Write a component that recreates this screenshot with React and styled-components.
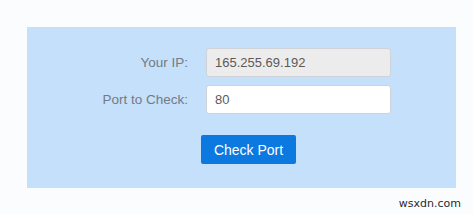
import React from "react";
import styled, { createGlobalStyle } from "styled-components";

const Global = createGlobalStyle`
  html, body { margin: 0; padding: 0; background: #fbfcfd; }
  body { font-family: "Liberation Sans", Arial, sans-serif; }
`;

const Page = styled.div`
  width: 473px;
  height: 214px;
  box-sizing: border-box;
  padding: 27px 17px 0 27px;
  display: flex;
  flex-direction: column;
`;

const Panel = styled.div`
  width: 429px;
  height: 161px;
  box-sizing: border-box;
  background: #c5e0fb;
  padding-top: 21px;
  display: flex;
  flex-direction: column;
`;

const Row = styled.div`
  display: grid;
  grid-template-columns: 161px 185px;
  column-gap: 18px;
  align-items: center;
  margin-bottom: ${(p) => p.$mb || 0}px;
`;

const Label = styled.label`
  text-align: right;
  font-size: 13.5px;
  color: #737b85;
`;

const Input = styled.input`
  box-sizing: border-box;
  width: 185px;
  height: 29px;
  border: 1px solid #cfd3d8;
  border-radius: 3px;
  padding: 0 8px;
  font-family: "Liberation Sans", Arial, sans-serif;
  font-size: 13px;
  color: #5a5a5a;
  background: ${(p) => (p.readOnly ? "#ececec" : "#ffffff")};
  outline: none;
`;

const ButtonRow = styled.div`
  padding-left: 174px;
  margin-top: 21px;
`;

const Button = styled.button`
  width: 95px;
  height: 29px;
  border: none;
  border-radius: 2px;
  background: #0b79e0;
  color: #ffffff;
  font-family: "Liberation Sans", Arial, sans-serif;
  font-size: 14px;
  padding: 0;
  cursor: pointer;
`;

const Watermark = styled.div`
  align-self: flex-end;
  margin-top: 9px;
  margin-right: -5px;
  font-family: "DejaVu Sans", Verdana, sans-serif;
  font-size: 11px;
  color: #2a2a2a;
`;

export default function App() {
  return (
    <>
      <Global />
      <Page>
        <Panel>
          <Row $mb={8}>
            <Label>Your IP:</Label>
            <Input readOnly value="165.255.69.192" />
          </Row>
          <Row>
            <Label>Port to Check:</Label>
            <Input defaultValue="80" />
          </Row>
          <ButtonRow>
            <Button>Check Port</Button>
          </ButtonRow>
        </Panel>
        <Watermark>wsxdn.com</Watermark>
      </Page>
    </>
  );
}
